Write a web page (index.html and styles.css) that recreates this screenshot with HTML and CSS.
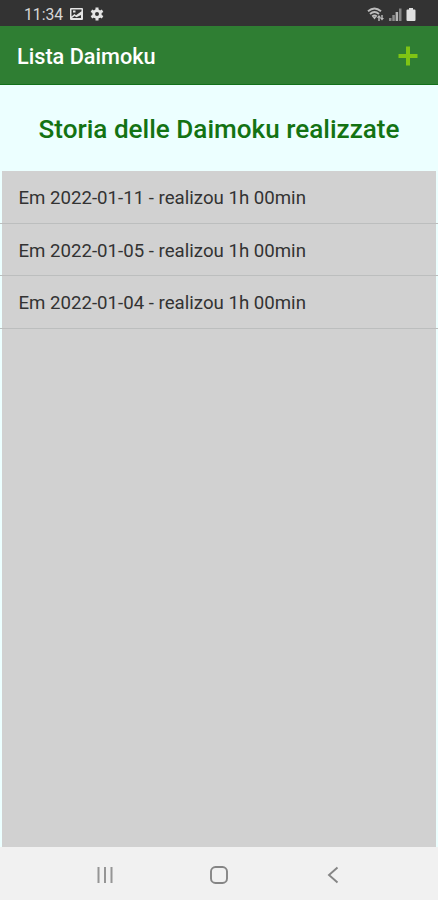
FILE: index.html
```html
<!DOCTYPE html>
<html lang="it">
<head>
    <meta charset="UTF-8">
    <meta name="viewport" content="width=device-width, initial-scale=1.0">
    <title>Lista Daimoku</title>
    <link rel="stylesheet" href="styles.css">
</head>
<body>
    <div class="screen">
        <div class="status-bar">
            <span class="clock">11:34</span>
            <svg class="icon-picture" width="13" height="12" viewBox="0 0 13 12">
                <path fill="#e4e4e4" fill-rule="evenodd" d="M1 0h11q1 0 1 1v10q0 1-1 1H1q-1 0-1-1V1q0-1 1-1zM1.5 1.5v7l3-2.500L6 7.300l5.500-4V1.500zM2 10h9V7L6.500 9.300 4.500 8z"/>
                <path fill="#e4e4e4" d="M3 2.500h2.500v2H3z"/>
            </svg>
            <svg class="icon-gear" width="14" height="14" viewBox="0 0 14 14">
                <g stroke="#e4e4e4" stroke-width="3">
                    <path d="M7 .6v12.8M1.4 3.8l11.2 6.4M1.4 10.2l11.2-6.4"/>
                </g>
                <circle cx="7" cy="7" r="4.7" fill="#e4e4e4"/>
                <circle cx="7" cy="7" r="2" fill="#333"/>
            </svg>
            <div class="status-right">
                <svg width="18" height="15" viewBox="0 0 18 15">
                    <g fill="none" stroke="#bdbdbd" stroke-width="1.9">
                        <path d="M1 4.2Q7.5-1.4 14 4.2M3 6.9q4.5-3.8 9 0M5.2 9.4q2.3-1.9 4.6 0"/>
                    </g>
                    <path fill="#bdbdbd" d="M5.5 9.8h4l-2 2.7zM12 8l2.2 2.7h-1.5V14h-1.4v-3.3H9.8zM15 13.5l-2-2.6h1.3V8h1.4v2.9H17z"/>
                </svg>
                <svg width="13" height="13" viewBox="0 0 13 13">
                    <path fill="#8c8c8c" d="M0 10h2.5v3H0zM3.3 7h2.5v6H3.3z"/>
                    <path fill="#b5b5b5" d="M6.600 4h2.500v9H6.600z"/>
                    <path fill="#858585" d="M10 .5h2.500V13H10z"/>
                </svg>
                <svg width="10" height="13" viewBox="0 0 10 13">
                    <path fill="#e0e0e0" d="M3 0h4v1.5h1.5q1 0 1 1V12q0 1-1 1h-7q-1 0-1-1V2.500q0-1 1-1H3z"/>
                </svg>
            </div>
        </div>

        <div class="app-bar">
            <h1>Lista Daimoku</h1>
            <svg class="add" width="20" height="20" viewBox="0 0 20 20">
                <path fill="#7fc414" d="M8 .5h4V8h7.500v4H12v7.500H8V12H.5V8H8z"/>
            </svg>
        </div>

        <h2 class="heading">Storia delle Daimoku realizzate</h2>

        <ul class="list">
            <li>Em 2022-01-11 - realizou 1h 00min</li>
            <li>Em 2022-01-05 - realizou 1h 00min</li>
            <li>Em 2022-01-04 - realizou 1h 00min</li>
        </ul>

        <div class="nav-bar">
            <svg width="18" height="18" viewBox="0 0 18 18">
                <path fill="none" stroke="#959595" stroke-width="2" d="M2.500 1v16M9 1v16M15.500 1v16"/>
            </svg>
            <svg width="18" height="18" viewBox="0 0 18 18">
                <rect x="1" y="1" width="16" height="16" rx="4.500" fill="none" stroke="#858585" stroke-width="1.900"/>
            </svg>
            <svg width="18" height="18" viewBox="0 0 18 18">
                <path fill="none" stroke="#858585" stroke-width="1.900" d="M13.500 1.500L5 9l8.500 7.500"/>
            </svg>
        </div>
    </div>
</body>
</html>
```
FILE: styles.css
```css
* {
    margin: 0;
    padding: 0;
    box-sizing: border-box;
}

body {
    font-family: Roboto, sans-serif;
    background: #ecffff;
}

.screen {
    display: flex;
    flex-direction: column;
    height: 900px;
    overflow: hidden;
}

svg {
    display: block;
    flex: none;
}

.status-bar {
    display: flex;
    align-items: center;
    height: 26px;
    padding: 2px 22px 0 24px;
    background: #333;
}

.clock {
    width: 46px;
    padding-top: 1px;
    font-size: 15.7px;
    line-height: 24px;
    color: #d8d8d8;
}

.icon-gear {
    margin-left: 7px;
}

.status-right {
    display: flex;
    align-items: center;
    gap: 4px;
    margin-left: auto;
}

.app-bar {
    display: flex;
    align-items: center;
    justify-content: space-between;
    height: 59px;
    padding: 2px 20px 0 17px;
    background: #2f7e33;
    border-bottom: 1px solid #12701a;
}

.app-bar h1 {
    padding-top: 2px;
    font-size: 21.7px;
    font-weight: 500;
    line-height: 28px;
    color: #fff;
}

.heading {
    height: 86px;
    font-size: 26.1px;
    font-weight: 500;
    line-height: 89px;
    text-align: center;
    white-space: nowrap;
    color: #137313;
}

.list {
    flex: 1;
    margin: 0 2px;
    background: #d1d1d1;
    list-style: none;
}

.list li {
    height: 52.5px;
    margin: 0 -2px;
    padding-left: 18.5px;
    border-bottom: 1px solid #bcbebe;
    font-size: 18.65px;
    line-height: 55px;
    color: #333;
}

.nav-bar {
    display: flex;
    align-items: center;
    justify-content: space-between;
    height: 53px;
    padding: 2px 96px 0 96px;
    background: #f1f1f1;
}
```
